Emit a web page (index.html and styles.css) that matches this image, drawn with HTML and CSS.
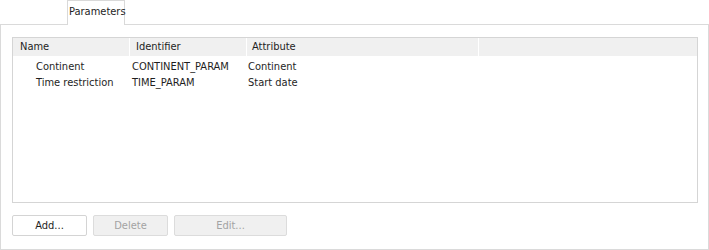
FILE: index.html
```html
<!DOCTYPE html>
<html>
<head>
<meta charset="utf-8">
<link rel="stylesheet" href="styles.css">
</head>
<body>
<div class="dialog">
  <div class="tabs">
    <div class="tab">Parameters</div>
  </div>
  <div class="panel">
    <div class="list">
      <div class="row header">
        <div class="cell c1">Name</div>
        <div class="cell c2">Identifier</div>
        <div class="cell c3">Attribute</div>
        <div class="cell c4"></div>
      </div>
      <div class="row item">
        <div class="cell c1 indent">Continent</div>
        <div class="cell c2">CONTINENT_PARAM</div>
        <div class="cell c3">Continent</div>
      </div>
      <div class="row item">
        <div class="cell c1 indent">Time restriction</div>
        <div class="cell c2">TIME_PARAM</div>
        <div class="cell c3">Start date</div>
      </div>
    </div>
    <div class="buttons">
      <button class="btn">Add...</button>
      <button class="btn disabled">Delete</button>
      <button class="btn disabled wide">Edit...</button>
    </div>
  </div>
</div>
</body>
</html>
```
FILE: styles.css
```css
* { box-sizing: border-box; }
html, body { margin: 0; padding: 0; background: #fff; }
body {
  font-family: "DejaVu Sans Condensed", "DejaVu Sans", sans-serif;
  font-size: 11px;
  color: #1e1e1e;
  width: 709px;
  height: 250px;
  overflow: hidden;
}
.dialog { display: flex; flex-direction: column; }
.tabs { display: flex; height: 25px; padding-left: 67px; }
.tab {
  position: relative;
  z-index: 1;
  width: 58px;
  height: 25px;
  background: #fff;
  border: 1px solid #d9d9d9;
  border-bottom: none;
  padding-left: 1px;
  line-height: 22px;
  text-align: center;
}
.panel {
  margin-top: -1px;
  width: 709px;
  height: 226px;
  border: 1px solid #dadada;
  padding: 12px 0 0 11px;
  display: flex;
  flex-direction: column;
}
.list {
  width: 686px;
  height: 166px;
  border: 1px solid #d5d5d5;
}
.row { display: flex; }
.header {
  height: 18px;
  background: #f0f0f0;
  line-height: 17px;
}
.header .cell { border-right: 1px solid #fff; }
.item { height: 16px; line-height: 16px; }
.header + .item { margin-top: 3px; }
.cell { white-space: nowrap; overflow: hidden; }
.c1 { width: 117px; padding-left: 7px; }
.c2 { width: 117px; padding-left: 2px; }
.c3 { width: 232px; padding-left: 1px; }
.c4 { flex: 1; border-right: none !important; }
.header .c2 { padding-left: 6px; }
.header .c3 { padding-left: 5px; }
.indent { padding-left: 23px; }
.buttons { display: flex; gap: 6px; margin-top: 12px; }
.btn {
  font: inherit;
  color: #1e1e1e;
  width: 75px;
  height: 21px;
  background: #fff;
  border: 1px solid #d4d4d4;
  border-radius: 2px;
  padding: 0;
  line-height: 19px;
}
.btn.disabled { background: #f0f0f0; border-color: #dcdcdc; color: #a3a3a3; }
.btn.wide { width: 113px; }
```
